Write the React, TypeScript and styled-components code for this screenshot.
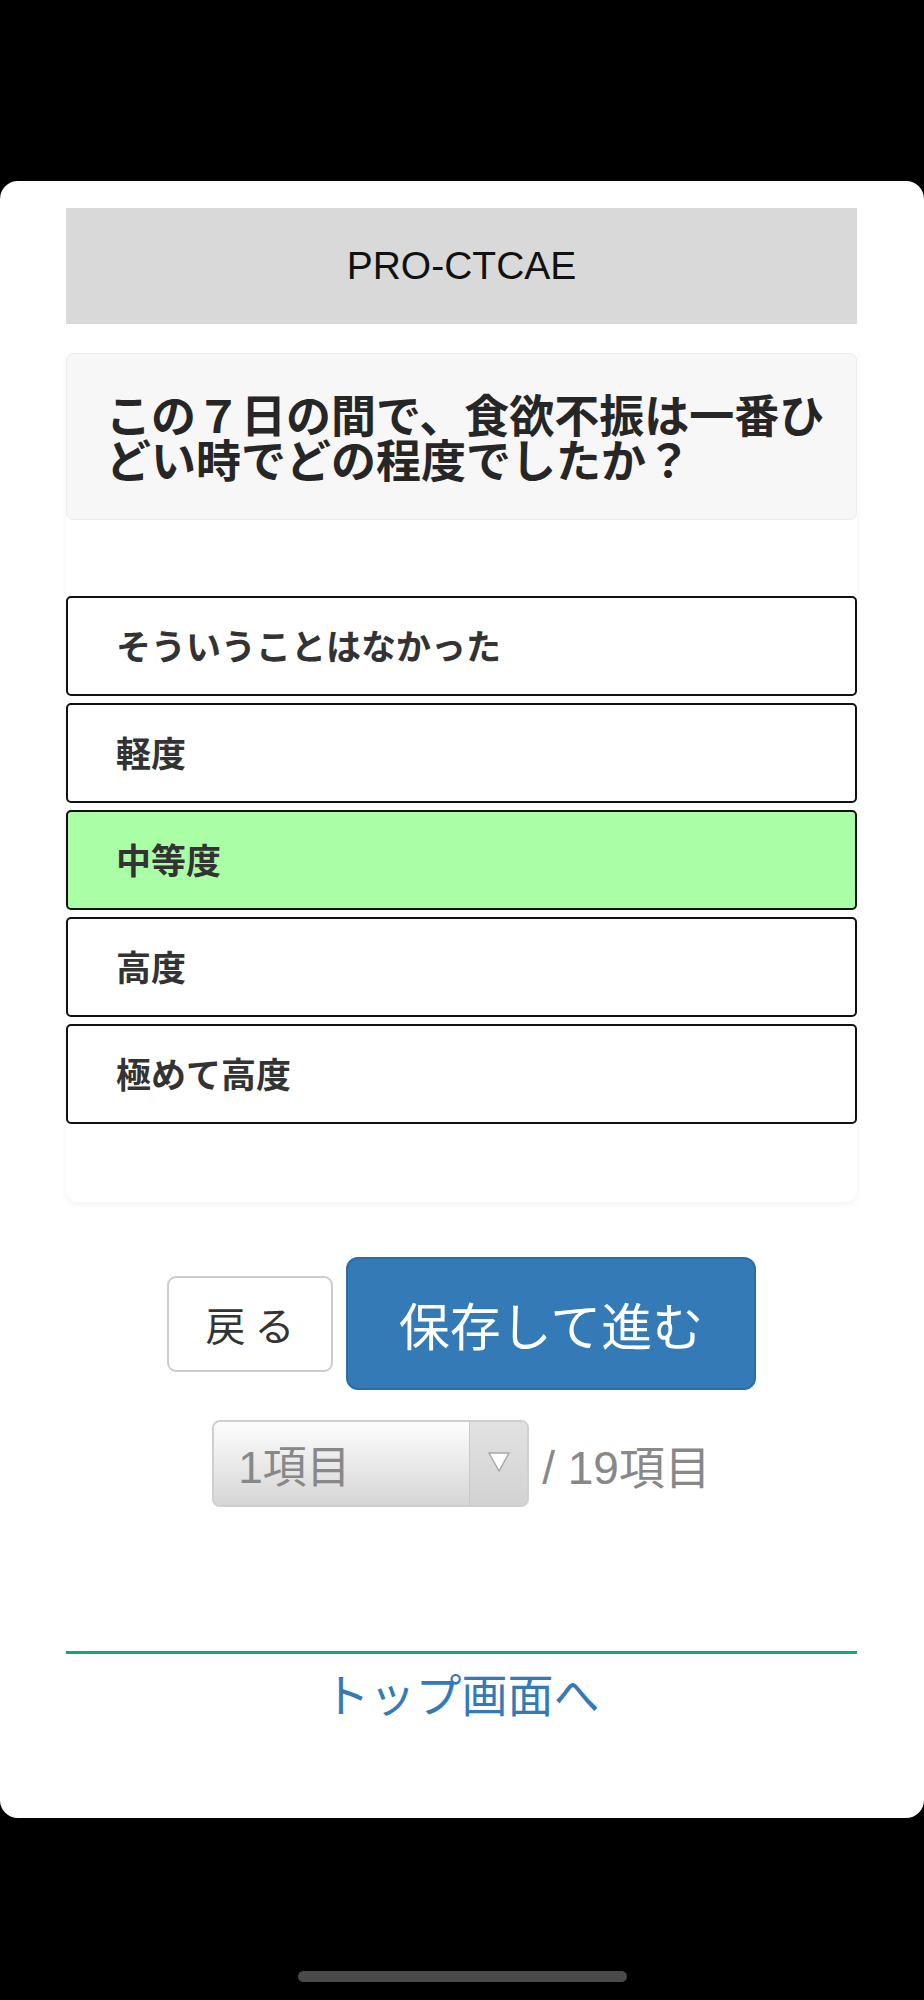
import React from "react";
import styled, { createGlobalStyle } from "styled-components";

const GlobalStyle = createGlobalStyle`
  html, body {
    margin: 0;
    padding: 0;
    background: #000;
  }
  * { box-sizing: border-box; }
  body {
    font-family: "Liberation Sans", "Noto Sans CJK JP", sans-serif;
  }
`;

const Screen = styled.div`
  width: 924px;
  height: 2000px;
  background: #000;
  display: flex;
  flex-direction: column;
`;

const StatusArea = styled.div`
  height: 181px;
  flex: none;
`;

const Card = styled.main`
  height: 1637px;
  flex: none;
  background: #fff;
  border-radius: 18px;
  padding: 27px 67px 0 66px;
  display: flex;
  flex-direction: column;
`;

const Header = styled.header`
  height: 116px;
  background: #d9d9d9;
  display: flex;
  align-items: center;
  justify-content: center;
  font-family: "Liberation Sans", Arial, sans-serif;
  font-size: 39px;
  color: #111;
`;

const Panel = styled.section`
  margin-top: 29px;
  background: #fff;
  border-radius: 0 0 12px 12px;
  box-shadow: 0 3px 6px rgba(0, 0, 0, 0.05);
  padding-bottom: 78px;
`;

const Question = styled.div`
  background: #f7f7f7;
  border: 1.5px solid #ececec;
  border-radius: 7px;
  padding: 37px 18px 38px 39px;
  font-family: "Noto Sans CJK JP", sans-serif;
  font-weight: 700;
  font-size: 45px;
  line-height: 45px;
  color: #262626;
`;

const Options = styled.div`
  margin-top: 76px;
  display: flex;
  flex-direction: column;
  gap: 7px;
`;

const Option = styled.div<{ $selected?: boolean }>`
  height: 100px;
  border: 2.5px solid #111;
  border-radius: 5px;
  background: ${(p) => (p.$selected ? "#aaffa6" : "#fff")};
  display: flex;
  align-items: center;
  padding-left: 48px;
  padding-bottom: 3px;
  font-family: "Noto Sans CJK JP", sans-serif;
  font-weight: 700;
  font-size: 35px;
  color: #333;
`;

const Actions = styled.div`
  margin-top: 55px;
  display: flex;
  justify-content: center;
  align-items: center;
  gap: 13px;
`;

const BackButton = styled.button`
  width: 166px;
  height: 96px;
  background: #fff;
  border: 2px solid #cccccc;
  border-radius: 9px;
  font-family: "Noto Sans CJK JP", sans-serif;
  font-size: 40px;
  font-weight: 400;
  color: #333;
  padding: 0;
  display: flex;
  align-items: center;
  justify-content: center;
`;

const PrimaryButton = styled.button`
  width: 410px;
  height: 133px;
  background: #337ab7;
  border: 2px solid #2e6da4;
  border-radius: 12px;
  font-family: "Noto Sans CJK JP", sans-serif;
  font-size: 51px;
  font-weight: 400;
  color: #fff;
  padding: 0;
  display: flex;
  align-items: center;
  justify-content: center;
`;

const Pager = styled.div`
  margin-top: 30px;
  display: flex;
  justify-content: center;
  align-items: center;
  gap: 13px;
`;

const Select = styled.div`
  width: 317px;
  height: 87px;
  border: 2px solid #cfcfcf;
  border-radius: 8px;
  background: linear-gradient(#fdfdfd, #d6d6d6);
  display: flex;
  overflow: hidden;
`;

const SelectValue = styled.div`
  flex: 1;
  display: flex;
  align-items: center;
  padding-left: 24px;
  font-family: "Liberation Sans", "Noto Sans CJK JP", sans-serif;
  font-size: 44px;
  color: #888;
`;

const SelectArrow = styled.div`
  width: 58px;
  border-left: 1.5px solid #c9c9c9;
  background: linear-gradient(#e2e2e2, #d2d2d2);
  display: flex;
  align-items: center;
  justify-content: center;
  padding-bottom: 4px;
`;

const Total = styled.span`
  font-family: "Liberation Sans", "Noto Sans CJK JP", sans-serif;
  font-size: 46px;
  color: #888;
`;

const Footer = styled.footer`
  margin-top: 144px;
  border-top: 3px solid #18a47a;
  display: flex;
  justify-content: center;
  padding-top: 11px;
`;

const TopLink = styled.a`
  font-family: "Noto Sans CJK JP", sans-serif;
  font-size: 46px;
  line-height: 54px;
  color: #337ab7;
  text-decoration: none;
`;

const BottomArea = styled.div`
  flex: 1;
  display: flex;
  justify-content: center;
  align-items: flex-end;
  padding-bottom: 18px;
`;

const HomeIndicator = styled.div`
  width: 329px;
  height: 11px;
  border-radius: 6px;
  background: #4a4a4a;
`;

const options = [
  "そういうことはなかった",
  "軽度",
  "中等度",
  "高度",
  "極めて高度",
];

export default function App() {
  const selected = 2;
  return (
    <>
      <GlobalStyle />
      <Screen>
        <StatusArea />
        <Card>
          <Header>PRO-CTCAE</Header>
          <Panel>
            <Question>この７日の間で、食欲不振は一番ひどい時でどの程度でしたか？</Question>
            <Options>
              {options.map((o, i) => (
                <Option key={o} $selected={i === selected}>
                  {o}
                </Option>
              ))}
            </Options>
          </Panel>
          <Actions>
            <BackButton>戻 る</BackButton>
            <PrimaryButton>保存して進む</PrimaryButton>
          </Actions>
          <Pager>
            <Select>
              <SelectValue>1項目</SelectValue>
              <SelectArrow>
                <svg width="24" height="22" viewBox="0 0 24 22">
                  <polygon
                    points="2,2 22,2 12,20"
                    fill="#fff"
                    stroke="#a8a8a8"
                    strokeWidth="1.5"
                    strokeLinejoin="round"
                  />
                </svg>
              </SelectArrow>
            </Select>
            <Total>/ 19項目</Total>
          </Pager>
          <Footer>
            <TopLink href="#">トップ画面へ</TopLink>
          </Footer>
        </Card>
        <BottomArea>
          <HomeIndicator />
        </BottomArea>
      </Screen>
    </>
  );
}
